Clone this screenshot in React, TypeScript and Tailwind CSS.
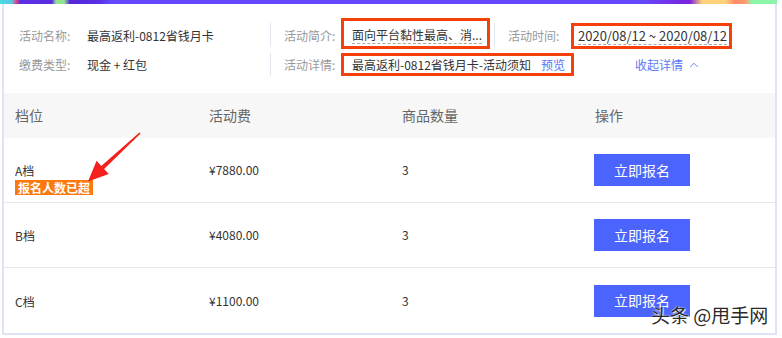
import React from 'react'
import { ChevronUp } from 'lucide-react'

const rows = [
  { level: 'A档', fee: '¥7880.00', qty: '3', full: true },
  { level: 'B档', fee: '¥4080.00', qty: '3', full: false },
  { level: 'C档', fee: '¥1100.00', qty: '3', full: false },
]

const cols = 'grid grid-cols-[194px_193px_193px_1fr]'

const App = () => {
  return (
    <div className="relative w-[782px] h-[338px] bg-white overflow-hidden font-['Noto_Sans_CJK_SC','Noto_Sans',sans-serif]">
      {/* banner edge */}
      <div className="h-[4px] w-[777px] bg-[linear-gradient(90deg,#4ddbe0_0px,#54c8e6_12px,#f2407a_16px,#5a2fe2_20px,#5b2de0_52px,#92e48e_56px,#92e48e_64px,#5624d8_70px,#5a2fe6_100px,#6349fb_110px,#6349fb_640px,#7a22dc_690px,#ffcf7a_702px,#ffd37a_725px,#ff8a6a_735px,#ff9a6e_745px,#8cf5a8_752px,#8cf5a8_777px)]" />

      <div className="ml-[2px] w-[775px] border-x-2 border-b-2 border-[#dfe3f6]">
        {/* info */}
        <div className="h-[89px] pt-[14px] text-[12px] leading-[16px]">
          <div className="flex items-start">
            <div className="flex w-[266px] h-[24px] mt-[6px] items-center pl-[15px]">
              <span className="w-[68px] text-[#999]">活动名称:</span>
              <span className="text-[#333]">最高返利-0812省钱月卡</span>
            </div>
            <div className="w-px h-[24px] mt-[5px] bg-[#e3e6ee]" />
            <div className="flex w-[223px] items-start pl-[13px]">
              <span className="w-[57px] mt-[10px] text-[#999]">活动简介:</span>
              <div className="w-[149px] h-[31px] border-[3px] border-[#f5400c] pl-[8px] pt-[6px] whitespace-nowrap">
                <span className="inline-block border-b border-dashed border-[#aaa] text-[#333]">面向平台黏性最高、消...</span>
              </div>
            </div>
            <div className="w-px h-[24px] mt-[5px] bg-[#e3e6ee]" />
            <div className="flex items-start pl-[13px]">
              <span className="w-[63px] mt-[10px] text-[#999]">活动时间:</span>
              <div className="w-[161px] h-[26px] mt-[5px] border-[3px] border-[#f5400c] pl-[4px] pt-[2px] whitespace-nowrap">
                <span className="inline-block border-b border-dashed border-[#aaa] text-[13px] text-[#333]">2020/08/12 ~ 2020/08/12</span>
              </div>
            </div>
          </div>

          <div className="flex items-center h-[23px] mt-[4px]">
            <div className="flex w-[266px] items-center pl-[15px]">
              <span className="w-[68px] text-[#999]">缴费类型:</span>
              <span className="text-[#333]">现金 + 红包</span>
            </div>
            <div className="w-px h-[23px] bg-[#e3e6ee]" />
            <div className="flex items-center pl-[13px]">
              <span className="w-[57px] text-[#999]">活动详情:</span>
              <div className="flex w-[233px] h-[23px] items-center border-[3px] border-[#f5400c] pl-[8px] whitespace-nowrap">
                <span className="text-[#333]">最高返利-0812省钱月卡-活动须知</span>
                <span className="ml-[10px] text-[#5574f6]">预览</span>
              </div>
              <button className="ml-[61px] flex items-center gap-[4px] text-[#5a78f5]">
                收起详情
                <ChevronUp size={14} strokeWidth={1.6} />
              </button>
            </div>
          </div>
        </div>

        {/* table */}
        <div className={`${cols} h-[45px] items-center bg-[#f7f7f7] text-[14px] text-[#666]`}>
          <div className="pl-[11px]">档位</div>
          <div className="pl-[11px]">活动费</div>
          <div className="pl-[11px]">商品数量</div>
          <div className="pl-[11px]">操作</div>
        </div>
        {rows.map((r, i) => (
          <div
            key={r.level}
            className={`${cols} h-[65px] items-center text-[12px] text-[#333] ${i < rows.length - 1 ? 'border-b border-[#e8e8e8]' : ''}`}
          >
            <div className="relative pl-[11px] pt-[2px]">
              <span className="leading-[16px]">{r.level}</span>
              {r.full && (
                <span className="absolute left-[11px] top-[20px] bg-[#fb7a10] px-[3px] text-[12px] leading-[15px] font-bold text-white whitespace-nowrap">
                  报名人数已超
                </span>
              )}
            </div>
            <div className="pl-[11px]">{r.fee}</div>
            <div className="pl-[11px]">{r.qty}</div>
            <div className="pl-[10px]">
              <button className="w-[96px] h-[32px] bg-[#4b64fe] text-[14px] text-white">立即报名</button>
            </div>
          </div>
        ))}
      </div>

      {/* annotation arrow */}
      <svg className="absolute left-0 top-0 pointer-events-none" width="782" height="338">
        <polygon
          points="140.6,133.6 104.1,168.9 108.8,174 88,181.5 96.6,160.8 101.3,165.9 139.4,132.4"
          fill="#f5201c"
        />
      </svg>

      {/* watermark */}
      <div className="absolute left-[651px] top-[303px] text-[19px] leading-[24px] text-[#2a2a2a] whitespace-nowrap [text-shadow:0_0_2px_#fff,1px_1px_1px_#fff]">
        头条 @甩手网
      </div>
    </div>
  )
}

export default App
